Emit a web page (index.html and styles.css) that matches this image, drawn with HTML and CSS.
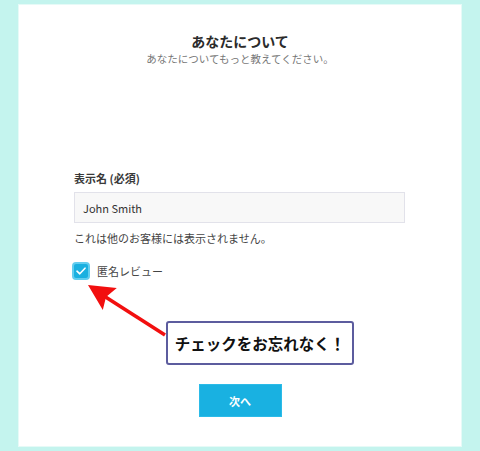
FILE: index.html
```html
<!DOCTYPE html>
<html lang="ja">
<head>
    <meta charset="UTF-8">
    <meta name="viewport" content="width=device-width, initial-scale=1.0">
    <title>あなたについて</title>
    <link rel="stylesheet" href="styles.css">
</head>
<body>
    <div class="card">
        <div class="heading">
            <h1 class="title">あなたについて</h1>
            <p class="subtitle">あなたについてもっと教えてください。</p>
        </div>

        <div class="form">
            <label class="field-label" for="displayName">表示名 (必須)</label>
            <input class="field-input" id="displayName" type="text" value="John Smith">
            <p class="field-help">これは他のお客様には表示されません。</p>

            <div class="check-row">
                <span class="check-box">
                    <svg width="10" height="8" viewBox="0 0 10 8">
                        <path d="M1 4.2 L3.8 6.8 L9 1.2" fill="none" stroke="#fff" stroke-width="1.6" stroke-linecap="round" stroke-linejoin="round"/>
                    </svg>
                </span>
                <span class="check-label">匿名レビュー</span>
            </div>
        </div>

        <div class="actions">
            <button class="next-btn">次へ</button>
        </div>

        <!-- annotation overlay -->
        <svg class="arrow" width="444" height="443" viewBox="0 0 444 443">
            <line x1="86" y1="292" x2="147" y2="331" stroke="#f20f0f" stroke-width="3.6"/>
            <polygon points="70,281 84.8,305.9 88,293 98.8,284.1" fill="#f20f0f"/>
        </svg>
        <div class="callout">チェックをお忘れなく！</div>
    </div>
</body>
</html>
```

FILE: styles.css
```css
body {
    margin: 0;
    background: #c4f4ee;
    font-family: "Noto Sans CJK JP", "Noto Sans", sans-serif;
    color: #333;
}

.card {
    position: relative;
    box-sizing: border-box;
    margin: 4px 18px;
    width: 444px;
    height: 443px;
    background: #fff;
    border: 1px solid #e6faf7;
    padding-top: 27px;
}

.heading {
    text-align: center;
}

.title {
    margin: 0 0 2px;
    font-size: 14px;
    line-height: 18px;
    font-weight: bold;
    color: #2b2b2b;
}

.subtitle {
    margin: 0;
    font-size: 10.5px;
    line-height: 13px;
    color: #777;
}

.form {
    display: flex;
    flex-direction: column;
    padding: 0 56px 0 55px;
    margin-top: 105px;
}

.field-label {
    font-size: 11px;
    line-height: 16px;
    font-weight: bold;
    color: #3a3a3a;
}

.field-input {
    box-sizing: border-box;
    margin-top: 6px;
    height: 31px;
    width: 100%;
    padding: 0 8px;
    border: 1px solid #e2e2ea;
    background: #f8f8f8;
    font-family: inherit;
    font-size: 11px;
    color: #333;
    outline: none;
}

.field-help {
    margin: 7px 0 0;
    font-size: 11px;
    line-height: 16px;
    color: #444;
}

.check-row {
    display: flex;
    align-items: center;
    gap: 7px;
    margin-top: 16px;
    margin-left: -2px;
}

.check-box {
    box-sizing: border-box;
    width: 18px;
    height: 18px;
    border-radius: 4px;
    background: #1ab0e0;
    border: 2px solid #63cdef;
    display: flex;
    align-items: center;
    justify-content: center;
}

.check-label {
    font-size: 11px;
    color: #444;
}

.actions {
    display: flex;
    justify-content: center;
    margin-top: 104px;
}

.next-btn {
    width: 83px;
    height: 33px;
    border: 1px solid #2bbbe8;
    background: #19b1e1;
    color: #fff;
    font-family: inherit;
    font-size: 11px;
    font-weight: bold;
    cursor: pointer;
}

.arrow {
    position: absolute;
    left: -1px;
    top: -1px;
}

.callout {
    position: absolute;
    left: 147px;
    top: 316px;
    box-sizing: border-box;
    width: 188px;
    height: 44px;
    border: 2px solid #5c5c9e;
    border-radius: 3px;
    background: #fff;
    display: flex;
    align-items: center;
    justify-content: center;
    font-size: 15.5px;
    font-weight: bold;
    color: #111;
}
```
